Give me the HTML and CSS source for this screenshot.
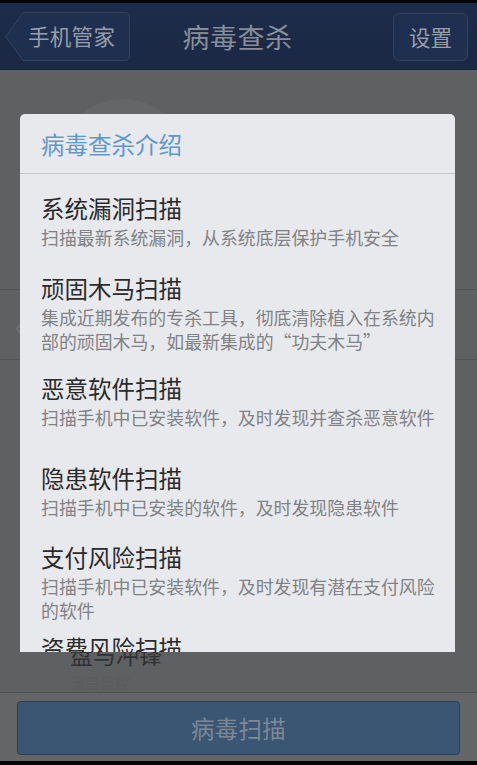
FILE: index.html
```html
<!DOCTYPE html>
<html lang="zh-CN">
<head>
<meta charset="utf-8">
<title>病毒查杀</title>
<link rel="stylesheet" href="styles.css">
</head>
<body>
<div class="screen">
  <div class="status"></div>
  <header class="navbar">
    <div class="nav-left">
      <a class="back-btn">
        <svg class="back-shape" width="125" height="49" viewBox="0 0 125 49" aria-hidden="true">
          <path d="M18 0.5 H120 Q124.5 0.5 124.5 5 V44 Q124.5 48.5 120 48.5 H18 L0.8 24.5 Z" fill="#1f2f4f" stroke="#33425f" stroke-width="1"/>
        </svg>
        <span class="back-label">手机管家</span>
      </a>
    </div>
    <h1 class="nav-title">病毒查杀</h1>
    <div class="nav-right">
      <a class="settings-btn">设置</a>
    </div>
  </header>

  <main class="content">
    <div class="hero"><div class="ring"></div></div>
    <div class="row row-first"><span class="row-arrow">‹</span></div>
    <div class="row row-rest">
      <span class="bg-text">盘与冲锋</span>
      <span class="bg-text faint">流量监控</span>
    </div>
  </main>

  <footer class="bottom">
    <div class="scan-btn">病毒扫描</div>
  </footer>
  <div class="status bottom-strip"></div>

  <section class="dialog">
    <div class="dialog-head">病毒查杀介绍</div>
    <div class="dialog-list">
      <div class="item">
        <div class="item-title">系统漏洞扫描</div>
        <div class="item-desc">扫描最新系统漏洞，从系统底层保护手机安全</div>
      </div>
      <div class="item">
        <div class="item-title">顽固木马扫描</div>
        <div class="item-desc">集成近期发布的专杀工具，彻底清除植入在系统内部的顽固木马，如最新集成的“功夫木马”</div>
      </div>
      <div class="item">
        <div class="item-title">恶意软件扫描</div>
        <div class="item-desc">扫描手机中已安装软件，及时发现并查杀恶意软件</div>
      </div>
      <div class="item">
        <div class="item-title">隐患软件扫描</div>
        <div class="item-desc">扫描手机中已安装的软件，及时发现隐患软件</div>
      </div>
      <div class="item">
        <div class="item-title">支付风险扫描</div>
        <div class="item-desc">扫描手机中已安装软件，及时发现有潜在支付风险的软件</div>
      </div>
      <div class="item">
        <div class="item-title">资费风险扫描</div>
        <div class="item-desc">扫描手机中已安装软件，及时发现资费风险</div>
      </div>
    </div>
  </section>
</div>
</body>
</html>
```

FILE: styles.css
```css
* { box-sizing: border-box; }

html, body {
  margin: 0;
  padding: 0;
  background: #000;
}

body {
  font-family: "Noto Sans CJK SC", "Noto Sans", "DejaVu Sans", sans-serif;
}

.screen {
  position: relative;
  width: 477px;
  height: 765px;
  overflow: hidden;
  background: #5f6062;
  display: flex;
  flex-direction: column;
}

.status {
  height: 3px;
  background: #050608;
  flex: none;
}

.bottom-strip {
  height: 5px;
}

/* ---------- navbar ---------- */
.navbar {
  flex: none;
  height: 67px;
  background: linear-gradient(#1d2c4b, #1a2844);
  border-bottom: 1px solid #14203a;
  display: grid;
  grid-template-columns: 1fr auto 1fr;
  align-items: center;
  padding: 0 9px 0 5px;
}

.nav-left { display: flex; justify-content: flex-start; }
.nav-right { display: flex; justify-content: flex-end; }

.back-btn {
  position: relative;
  display: block;
  width: 125px;
  height: 49px;
  margin-top: 1px;
}

.back-shape {
  position: absolute;
  left: 0;
  top: 0;
}

.back-label {
  position: relative;
  display: block;
  padding-left: 23px;
  line-height: 48px;
  font-size: 21.5px;
  color: #979ea8;
  letter-spacing: 0.3px;
}

.nav-title {
  margin: 0;
  font-weight: normal;
  font-size: 27px;
  color: #878e98;
  letter-spacing: 0.5px;
  padding-left: 2px;
}

.settings-btn {
  display: block;
  width: 75px;
  height: 48px;
  border: 1px solid #33425f;
  border-radius: 6px;
  background: #1f2f4f;
  color: #979ea8;
  font-size: 21.5px;
  line-height: 46px;
  text-align: center;
  margin-top: 1px;
}

/* ---------- background content ---------- */
.content {
  flex: 1;
  display: flex;
  flex-direction: column;
}

.hero {
  height: 220px;
  display: flex;
  justify-content: flex-start;
  padding: 29px 0 0 58px;
  border-bottom: 1px solid #535556;
}

.ring {
  width: 130px;
  height: 130px;
  border-radius: 50%;
  background: #646667;
}

.row-first {
  height: 70px;
  border-bottom: 1px solid #535556;
  padding-left: 15px;
  display: flex;
  align-items: center;
}

.row-arrow {
  color: #6f7173;
  font-size: 26px;
  line-height: 1;
}

.row-rest {
  flex: 1;
  display: flex;
  flex-direction: column;
  padding: 280px 0 0 70px;
}

.bg-text {
  font-size: 23px;
  line-height: 28px;
  color: #303132;
}

.bg-text.faint {
  color: #5b5c5d;
  font-size: 15px;
  line-height: 18px;
  margin-top: 6px;
}

/* ---------- bottom bar ---------- */
.bottom {
  flex: none;
  height: 69px;
  border-top: 1px solid #4e5051;
  background: #646566;
  padding: 8px 17px 7px;
}

.scan-btn {
  height: 54px;
  border: 1px solid #2c3f56;
  border-radius: 4px;
  background: #3b5673;
  color: #7b8898;
  font-size: 23.5px;
  line-height: 52px;
  text-align: center;
  letter-spacing: 0.3px;
}

/* ---------- dialog overlay ---------- */
.dialog {
  position: absolute;
  left: 20px;
  top: 114px;
  width: 435px;
  height: 538px;
  background: #e8e9ed;
  border-radius: 5px 5px 0 0;
  overflow: hidden;
}

.dialog-head {
  height: 60px;
  padding: 1px 0 0 21px;
  display: flex;
  align-items: center;
  font-size: 23.5px;
  color: #5e98cc;
  border-bottom: 1px solid #c5c6ca;
}

.dialog-list {
  padding: 19px 18px 0 21px;
}

.item-title {
  font-size: 23.5px;
  line-height: 30px;
  color: #2b2b2c;
}

.item-desc {
  font-size: 17.9px;
  line-height: 24px;
  margin-top: 2px;
  color: #808286;
}

.item + .item { margin-top: 24px; }
.item:nth-child(3) { margin-top: 20px; }
.item:nth-child(4) { margin-top: 34px; }
.item:nth-child(5) { margin-top: 23px; }
.item:nth-child(6) { margin-top: 11px; }
```
